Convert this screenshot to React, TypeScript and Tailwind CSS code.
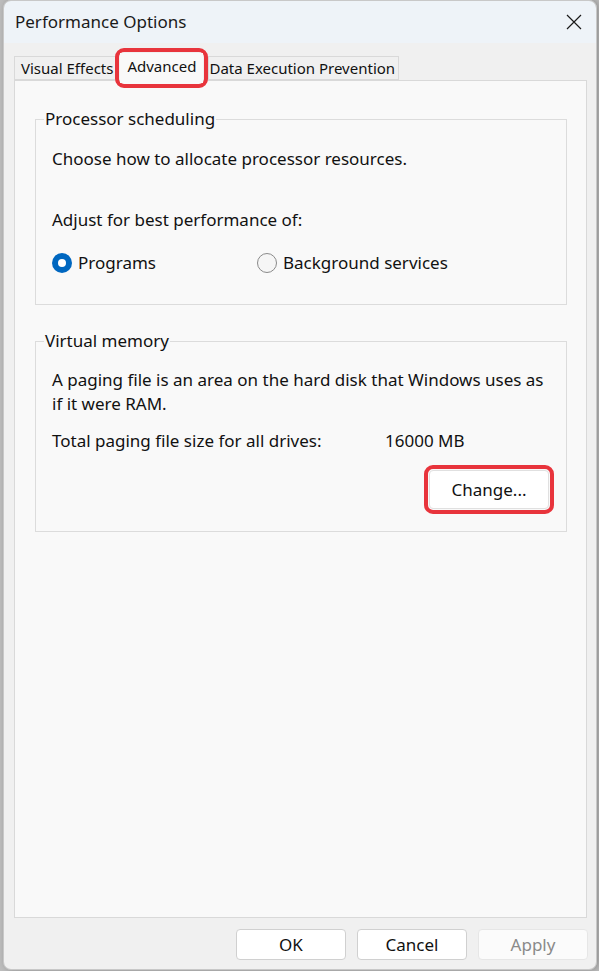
import React from 'react';

function CloseIcon() {
    return (
        <svg width="16" height="16" viewBox="0 0 16 16" fill="none" stroke="#1a1a1a" strokeWidth="1.2">
            <path d="M1 1 L15 15 M15 1 L1 15" />
        </svg>
    );
}

function Radio({ checked, label }: { checked?: boolean; label: string }) {
    return (
        <label className="flex items-center gap-[6px]">
            {checked ? (
                <span className="w-[20px] h-[20px] rounded-full bg-[#0067c0] flex items-center justify-center">
                    <span className="w-[8px] h-[8px] rounded-full bg-white" />
                </span>
            ) : (
                <span className="w-[20px] h-[20px] rounded-full border border-[#8a8a8a] bg-[#f6f6f6]" />
            )}
            <span>{label}</span>
        </label>
    );
}

function Group({ title, children, className }: { title: string; children: React.ReactNode; className?: string }) {
    return (
        <fieldset className={`border border-[#dcdcdc] ml-[20px] mr-[19px] ${className ?? ''}`}>
            <legend className="ml-[8px] px-[1px] leading-[22px]">{title}</legend>
            {children}
        </fieldset>
    );
}

export default function App() {
    return (
        <div className="w-[599px] h-[971px] bg-[#bdbdbd] flex [font-family:'Noto_Sans',sans-serif] text-[17px] text-[#111]">
            <div className="ml-[3px] w-[594px] h-[970px] rounded-[8px] overflow-hidden flex flex-col border border-[#c8c8c8] shadow-[2px_0_6px_rgba(0,0,0,0.25)]">
                {/* Title bar */}
                <div className="h-[42px] bg-[#eef3f8] flex items-center justify-between pl-[11px] pr-[14px]">
                    <span className="text-[17px] text-[#1a1a1a] pb-[1px]">Performance Options</span>
                    <CloseIcon />
                </div>

                {/* Body */}
                <div className="flex-1 bg-[#f0f0f0] flex flex-col pl-[10px] pr-[9px]">
                    {/* Tabs */}
                    <div className="flex items-end h-[37px] relative z-10 text-[15px]">
                        <div className="h-[24px] pl-[6px] pr-[2px] border border-[#d9d9d9] border-r-0 bg-[#f0f0f0] flex items-center leading-none">
                            Visual Effects
                        </div>
                        <div className="-mb-[8px] border-[4px] border-[#e8343c] rounded-[9px] p-[1px] relative">
                            <div className="h-[30px] px-[7px] pb-[4px] bg-[#f9f9f9] flex items-center leading-none">
                                Advanced
                            </div>
                        </div>
                        <div className="h-[24px] pl-[0px] pr-[3px] border border-[#d9d9d9] bg-[#f0f0f0] flex items-center leading-none">
                            Data Execution Prevention
                        </div>
                    </div>

                    {/* Tab panel */}
                    <div className="h-[838px] bg-[#f9f9f9] border border-[#d9d9d9] pt-[27px]">
                        <Group title="Processor scheduling" className="h-[197px]">
                            <div className="pl-[16px] pt-[17px] leading-[24px]">
                                <div>Choose how to allocate processor resources.</div>
                                <div className="mt-[37px]">Adjust for best performance of:</div>
                                <div className="mt-[19px] flex">
                                    <div className="w-[205px]">
                                        <Radio checked label="Programs" />
                                    </div>
                                    <Radio label="Background services" />
                                </div>
                            </div>
                        </Group>

                        <Group title="Virtual memory" className="h-[202px] mt-[25px]">
                            <div className="pl-[16px] pr-[12px] pt-[16px] leading-[24px]">
                                <div>
                                    A paging file is an area on the hard disk that Windows uses as
                                    <br />
                                    if it were RAM.
                                </div>
                                <div className="mt-[13px] flex">
                                    <span className="w-[333px]">Total paging file size for all drives:</span>
                                    <span>16000 MB</span>
                                </div>
                                <div className="mt-[12px] flex justify-end">
                                    <div className="border-[4px] border-[#e8343c] rounded-[9px] p-[1px]">
                                        <button className="w-[120px] h-[39px] bg-white rounded-[4px] border border-[#e0e0e0]">
                                            Change...
                                        </button>
                                    </div>
                                </div>
                            </div>
                        </Group>
                    </div>

                    {/* Buttons */}
                    <div className="flex justify-end gap-[11px] mt-[11px] -mr-[1px]">
                        <button className="w-[110px] h-[31px] bg-white border border-[#d0d0d0] rounded-[4px]">OK</button>
                        <button className="w-[110px] h-[31px] bg-white border border-[#d0d0d0] rounded-[4px]">Cancel</button>
                        <button className="w-[110px] h-[31px] bg-[#fbfbfb] border border-[#e6e6e6] rounded-[4px] text-[#8a8a8a]">Apply</button>
                    </div>
                </div>
            </div>
        </div>
    );
}
